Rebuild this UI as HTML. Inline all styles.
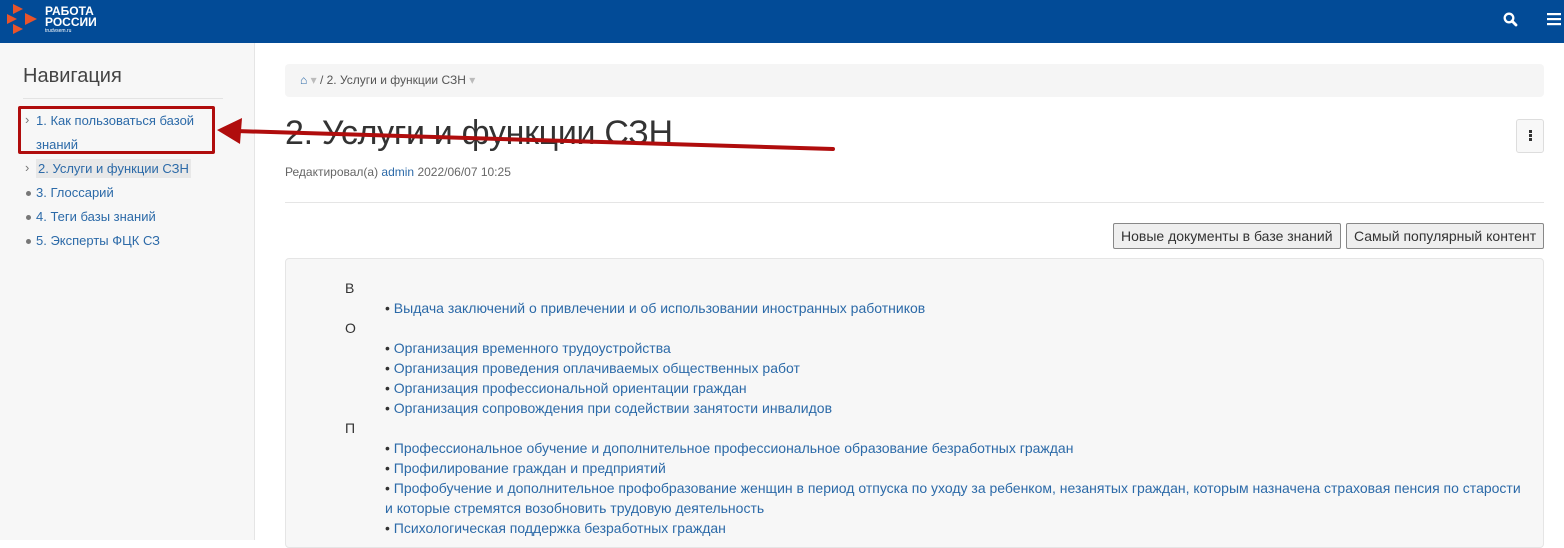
<!DOCTYPE html>
<html><head><meta charset="utf-8"><style>
*{box-sizing:border-box;margin:0;padding:0}
body{width:1564px;height:540px;overflow:hidden;font-family:"Liberation Sans",Arial,sans-serif;font-size:14px;color:#333;background:#fff;position:relative}
a{color:#2c6aa8;text-decoration:none}
.hdr{position:absolute;left:0;top:0;width:1564px;height:43px;background:#024b97}
.side{position:absolute;left:0;top:43px;width:255px;height:497px;background:#f7f7f7;border-right:1px solid #e5e5e5}
.side h2{position:absolute;left:23px;top:22px;font-size:20px;font-weight:normal;color:#444}
.side .hr{position:absolute;left:23px;top:55px;width:200px;border-top:1px solid #e3e3e3}
.nav{position:absolute;left:25px;top:66px;width:200px;line-height:24px;font-size:13px}
.nav div{position:relative;padding-left:11px}
.nav .ch:before{content:"›";position:absolute;left:0;top:-1px;color:#777}
.nav .dt:before{content:"";position:absolute;left:1px;top:10px;width:5px;height:5px;border-radius:50%;background:#777}
.bc{position:absolute;left:285px;top:64px;width:1259px;height:33px;background:#f5f5f5;border-radius:4px;font-size:12px;line-height:33px;padding-left:15px;color:#555}
h1{position:absolute;left:285px;top:114px;font-size:34px;font-weight:normal;color:#333;letter-spacing:-0.3px}
.meta{position:absolute;left:285px;top:165px;font-size:12px;color:#666}
.line{position:absolute;left:285px;top:202px;width:1259px;border-top:1px solid #e5e5e5}
.btn{position:absolute;top:223px;height:26px;border:1px solid #888;border-radius:2px;background:#efefef;font-size:14px;line-height:24px;padding:0 7px;color:#333}
.box{position:absolute;left:285px;top:258px;width:1259px;height:290px;background:#f7f7f7;border:1px solid #e5e5e5;border-radius:4px}
.ct{position:absolute;left:345px;top:278px;width:1180px;line-height:20px;font-size:14px}
.ct .l{padding-left:40px}
.kb{position:absolute;left:1516px;top:119px;width:28px;height:34px;border:1px solid #ddd;border-radius:3px;background:#f8f8f8}
</style></head><body>
<div class="hdr">
<svg style="position:absolute;left:6px;top:3px" width="34" height="34" viewBox="0 0 34 34"><polygon points="7,1 17,6 7,11" fill="#e8542b"/><polygon points="19,10 31,16 19,22" fill="#e8542b"/><polygon points="7,21 17,26 7,31" fill="#e8542b"/><polygon points="1,11 11,16 1,21" fill="#e8542b"/></svg>
<div style="position:absolute;left:45px;top:6px;color:#fff;font-weight:bold;font-size:12px;line-height:11px">РАБОТА<br>РОССИИ<div style="font-size:5px;font-weight:normal;line-height:7px">trudvsem.ru</div></div>
<svg style="position:absolute;left:1503px;top:12px" width="15" height="15" viewBox="0 0 15 15"><circle cx="6" cy="6" r="4.3" fill="none" stroke="#fff" stroke-width="2.3"/><line x1="9" y1="9" x2="13" y2="13" stroke="#fff" stroke-width="2.8" stroke-linecap="round"/></svg>
<svg style="position:absolute;left:1547px;top:12px" width="14" height="14" viewBox="0 0 14 14"><rect y="1" width="14" height="2.2" fill="#fff"/><rect y="6" width="14" height="2.2" fill="#fff"/><rect y="11" width="14" height="2.2" fill="#fff"/></svg>
</div>
<div class="side"><h2>Навигация</h2><div class="hr"></div>
<div class="nav">
<div class="ch"><a>1. Как пользоваться базой знаний</a></div>
<div class="ch"><a style="background:#e8e8e8;padding:2px 2px">2. Услуги и функции СЗН</a></div>
<div class="dt"><a>3. Глоссарий</a></div>
<div class="dt"><a>4. Теги базы знаний</a></div>
<div class="dt"><a>5. Эксперты ФЦК СЗ</a></div>
</div></div>
<div class="bc"><span style="color:#2c6aa8">&#8962;</span> <span style="color:#bbb">▾</span> / 2. Услуги и функции СЗН <span style="color:#bbb">▾</span></div>
<h1>2. Услуги и функции СЗН</h1>
<div class="meta">Редактировал(а) <a>admin</a> 2022/06/07 10:25</div>
<div class="kb"><div style="position:absolute;left:12px;top:10px;width:3px;height:3px;background:#333;box-shadow:0 4px #333,0 8px #333"></div></div>
<div class="line"></div>
<div class="btn" style="left:1113px">Новые документы в базе знаний</div>
<div class="btn" style="left:1346px">Самый популярный контент</div>
<div class="box"></div>
<div class="ct">
<div>В</div>
<div class="l">• <a>Выдача заключений о привлечении и об использовании иностранных работников</a></div>
<div>О</div>
<div class="l">• <a>Организация временного трудоустройства</a></div>
<div class="l">• <a>Организация проведения оплачиваемых общественных работ</a></div>
<div class="l">• <a>Организация профессиональной ориентации граждан</a></div>
<div class="l">• <a>Организация сопровождения при содействии занятости инвалидов</a></div>
<div>П</div>
<div class="l">• <a>Профессиональное обучение и дополнительное профессиональное образование безработных граждан</a></div>
<div class="l">• <a>Профилирование граждан и предприятий</a></div>
<div class="l">• <a>Профобучение и дополнительное профобразование женщин в период отпуска по уходу за ребенком, незанятых граждан, которым назначена страховая пенсия по старости и которые стремятся возобновить трудовую деятельность</a></div>
<div class="l">• <a>Психологическая поддержка безработных граждан</a></div>
</div>
<div style="position:absolute;left:18px;top:106px;width:197px;height:48px;border:3px solid #b00d0d;border-radius:2px"></div>
<svg style="position:absolute;left:0;top:0" width="900" height="200"><line x1="236" y1="131" x2="833" y2="149" stroke="#b00d0d" stroke-width="4" stroke-linecap="round"/><polygon points="217,130 242,118 240,144" fill="#b00d0d"/></svg>
</body></html>
